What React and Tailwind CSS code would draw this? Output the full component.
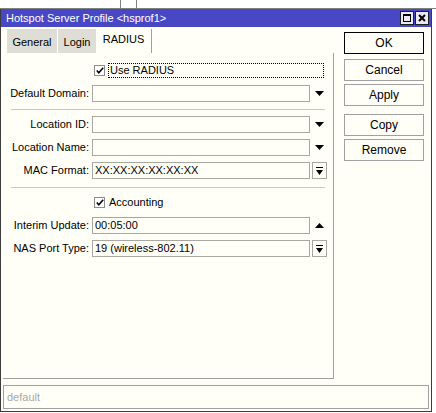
import React from 'react';

const font = { fontFamily: '"Liberation Sans", Arial, sans-serif' };

const DownArrow = () => (
    <svg width="9" height="5" viewBox="0 0 9 5">
        <path d="M0 0h9L4.5 5z" fill="#000" />
    </svg>
);

const UpArrow = () => (
    <svg width="9" height="5" viewBox="0 0 9 5">
        <path d="M0 5h9L4.5 0z" fill="#000" />
    </svg>
);

const SelectGlyph = () => (
    <svg width="7" height="8" viewBox="0 0 7 8">
        <path d="M0 0h7v1H0z M0 3h7L3.5 8z" fill="#000" />
    </svg>
);

const Check = ({ label, focused }) => (
    <div className="flex h-[15px] items-center">
        <div className="ml-[91px] flex h-[11px] w-[11px] items-center justify-center border border-[#8c8c8c] bg-white">
            <svg width="8" height="7" viewBox="0 0 8 7">
                <path d="M0.8 3.5l2 2.2L7.2 0.8" stroke="#000" strokeWidth="1.6" fill="none" />
            </svg>
        </div>
        <div
            className={`ml-[3px] flex h-[15px] items-center pl-[1px] ${focused ? 'w-[216px] border border-dotted border-black' : ''}`}
        >
            <span className="text-[11px] text-black">{label}</span>
        </div>
    </div>
);

const Row = ({ label, value, trigger }) => (
    <div className="flex h-[17px] items-center">
        <span className="w-[86px] text-right text-[11px] text-black">{label}</span>
        <div className="ml-[3px] flex h-[17px] w-[218px] items-center border border-[#a8a8a0] bg-[#fffff7] px-[2px] text-[11px] text-black">
            {value}
        </div>
        <div className="ml-[1px] flex h-[17px] w-[16px] items-center justify-center">
            {trigger === 'down' && <DownArrow />}
            {trigger === 'up' && <UpArrow />}
            {trigger === 'select' && (
                <div className="flex h-[17px] w-[15px] items-center justify-center border border-[#a8a8a0]">
                    <SelectGlyph />
                </div>
            )}
        </div>
    </div>
);

const Btn = ({ children, primary }) => (
    <div
        className={`flex h-[22px] w-[80px] items-center justify-center bg-[#fffff7] text-[12px] text-black ${primary ? 'border border-black' : 'border border-[#a0a0a0]'}`}
    >
        {children}
    </div>
);

export default function App() {
    return (
        <div className="flex h-[413px] w-[436px] flex-col overflow-hidden bg-white" style={font}>
            <div className="flex h-[9px] items-end border-b border-[#808080] pl-[120px]">
                <div className="h-[9px] w-px bg-[#808080]" />
                <div className="ml-[15px] h-[9px] w-px bg-[#808080]" />
            </div>
            <div className="flex">
                <div className="flex h-[403px] w-[432px] flex-col border-x border-b border-[#3c3c3c] bg-[#fffff7]">
                    <div className="flex h-[18px] items-center justify-between bg-[#4848c4] pl-[5px] pr-[2px]">
                        <span className="text-[11px] text-white">Hotspot Server Profile &lt;hsprof1&gt;</span>
                        <div className="flex gap-[1px]">
                            <div className="flex h-[14px] w-[14px] items-center justify-center border border-[#202020] bg-[#ece8f4]">
                                <div className="h-[8px] w-[8px] border border-black border-t-2" />
                            </div>
                            <div className="flex h-[14px] w-[14px] items-center justify-center border border-[#202020] bg-[#ece8f4]">
                                <svg width="8" height="8" viewBox="0 0 8 8">
                                    <path d="M1 1l6 6M7 1L1 7" stroke="#000" strokeWidth="2" />
                                </svg>
                            </div>
                        </div>
                    </div>
                    <div className="flex flex-1">
                        <div className="flex w-[333px] flex-col">
                            <div className="mt-[2px] flex h-[24px] pl-[6px] text-[11px]">
                                <div className="flex w-[50px] items-center justify-center bg-[#deded6] pt-[2px]">General</div>
                                <div className="ml-[1px] flex w-[38px] items-center justify-center bg-[#deded6] pt-[2px]">Login</div>
                                <div className="flex w-[56px] items-center justify-center border-r border-[#a0a0a0] pb-[3px]">RADIUS</div>
                            </div>
                            <div className="ml-[2px] flex h-[326px] flex-col border-b border-r border-[#a0a0a0] pt-[10px]">
                                <Check label="Use RADIUS" focused />
                                <div className="mt-[7px]">
                                    <Row label="Default Domain:" trigger="down" />
                                </div>
                                <div className="ml-[8px] mt-[7px] h-px w-[314px] bg-[#c8c8c0]" />
                                <div className="mt-[6px] flex flex-col gap-[6px]">
                                    <Row label="Location ID:" trigger="down" />
                                    <Row label="Location Name:" trigger="down" />
                                    <Row label="MAC Format:" value="XX:XX:XX:XX:XX:XX" trigger="select" />
                                </div>
                                <div className="ml-[8px] mt-[8px] h-px w-[314px] bg-[#c8c8c0]" />
                                <div className="mt-[7px]">
                                    <Check label="Accounting" />
                                </div>
                                <div className="mt-[7px] flex flex-col gap-[6px]">
                                    <Row label="Interim Update:" value="00:05:00" trigger="up" />
                                    <Row label="NAS Port Type:" value="19 (wireless-802.11)" trigger="select" />
                                </div>
                            </div>
                        </div>
                        <div className="ml-[10px] flex flex-col pt-[5px]">
                            <Btn primary>OK</Btn>
                            <div className="mt-[5px] flex flex-col gap-[3px]">
                                <Btn>Cancel</Btn>
                                <Btn>Apply</Btn>
                            </div>
                            <div className="mt-[8px] flex flex-col gap-[3px]">
                                <Btn>Copy</Btn>
                                <Btn>Remove</Btn>
                            </div>
                        </div>
                    </div>
                    <div className="mx-[2px] mb-[2px] mt-[6px] flex h-[24px] items-center border border-[#a0a0a0] px-[3px]">
                        <span className="text-[11px] text-[#a8a8a8]">default</span>
                    </div>
                </div>
            </div>
        </div>
    );
}
